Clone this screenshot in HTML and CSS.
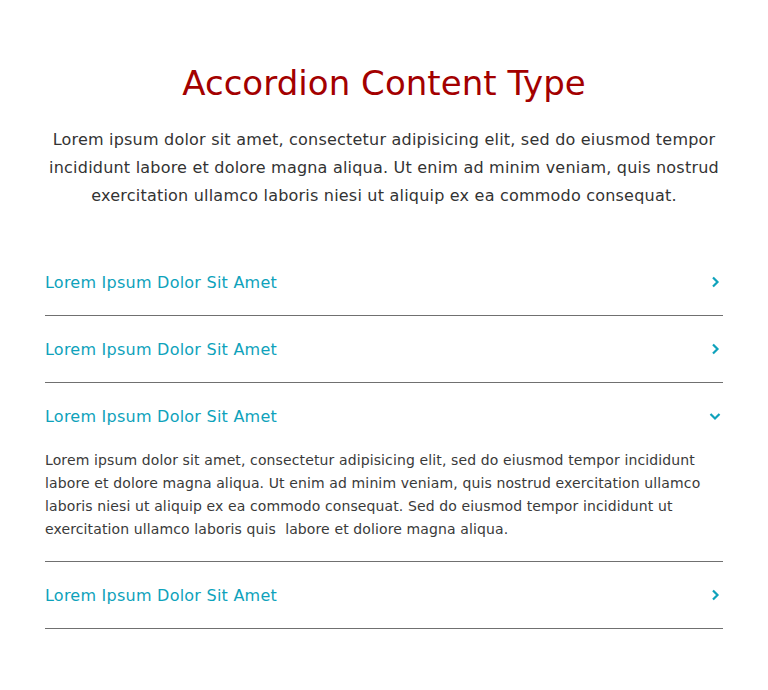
FILE: index.html
```html
<!DOCTYPE html>
<html lang="en">
<head>
<meta charset="utf-8">
<title>Accordion Content Type</title>
<link rel="stylesheet" href="styles.css">
</head>
<body>
<main class="page">
  <h1 class="title">Accordion Content Type</h1>
  <p class="intro">Lorem ipsum dolor sit amet, consectetur adipisicing elit, sed do eiusmod tempor incididunt labore et dolore magna aliqua. Ut enim ad minim veniam, quis nostrud exercitation ullamco laboris niesi ut aliquip ex ea commodo consequat.</p>
  <div class="accordion">
    <div class="item">
      <div class="head"><span class="label">Lorem Ipsum Dolor Sit Amet</span>
        <svg class="chev" width="12" height="12" viewBox="0 0 12 12"><path d="M4 1.5 L8.5 6 L4 10.5" fill="none" stroke="#0ea2bb" stroke-width="2.2"/></svg></div>
    </div>
    <div class="item">
      <div class="head"><span class="label">Lorem Ipsum Dolor Sit Amet</span>
        <svg class="chev" width="12" height="12" viewBox="0 0 12 12"><path d="M4 1.5 L8.5 6 L4 10.5" fill="none" stroke="#0ea2bb" stroke-width="2.2"/></svg></div>
    </div>
    <div class="item open">
      <div class="head"><span class="label">Lorem Ipsum Dolor Sit Amet</span>
        <svg class="chev" width="12" height="12" viewBox="0 0 12 12"><path d="M1.5 4 L6 8.5 L10.5 4" fill="none" stroke="#0ea2bb" stroke-width="2.2"/></svg></div>
      <div class="body">Lorem ipsum dolor sit amet, consectetur adipisicing elit, sed do eiusmod tempor incididunt labore et dolore magna aliqua. Ut enim ad minim veniam, quis nostrud exercitation ullamco laboris niesi ut aliquip ex ea commodo consequat. Sed do eiusmod tempor incididunt ut exercitation ullamco laboris quis&nbsp; labore et doliore magna aliqua.</div>
    </div>
    <div class="item">
      <div class="head"><span class="label">Lorem Ipsum Dolor Sit Amet</span>
        <svg class="chev" width="12" height="12" viewBox="0 0 12 12"><path d="M4 1.5 L8.5 6 L4 10.5" fill="none" stroke="#0ea2bb" stroke-width="2.2"/></svg></div>
    </div>
  </div>
</main>
</body>
</html>
```
FILE: styles.css
```css
html, body {
  margin: 0;
  padding: 0;
  background: #ffffff;
}
body {
  font-family: "DejaVu Sans", "Open Sans", sans-serif;
  color: #333333;
}
.page {
  width: 678px;
  margin: 0 0 0 45px;
  padding-top: 63px;
}
.title {
  margin: 0;
  font-size: 34px;
  line-height: 40px;
  font-weight: 400;
  letter-spacing: 0.05px;
  color: #a30000;
  text-align: center;
}
.intro {
  margin: 23px 0 0;
  font-size: 16px;
  line-height: 28px;
  letter-spacing: 0.21px;
  text-align: center;
  color: #333333;
}
.accordion {
  margin-top: 39px;
}
.item {
  border-bottom: 1px solid #707070;
}
.head {
  height: 66px;
  display: flex;
  align-items: center;
  justify-content: space-between;
}
.label {
  font-size: 16px;
  letter-spacing: 0.24px;
  color: #0ea2bb;
}
.chev {
  margin-right: 2px;
}
.body {
  font-size: 14px;
  line-height: 23px;
  letter-spacing: 0.12px;
  color: #3a3a3a;
  padding: 0 20px 20px 0;
}
```
